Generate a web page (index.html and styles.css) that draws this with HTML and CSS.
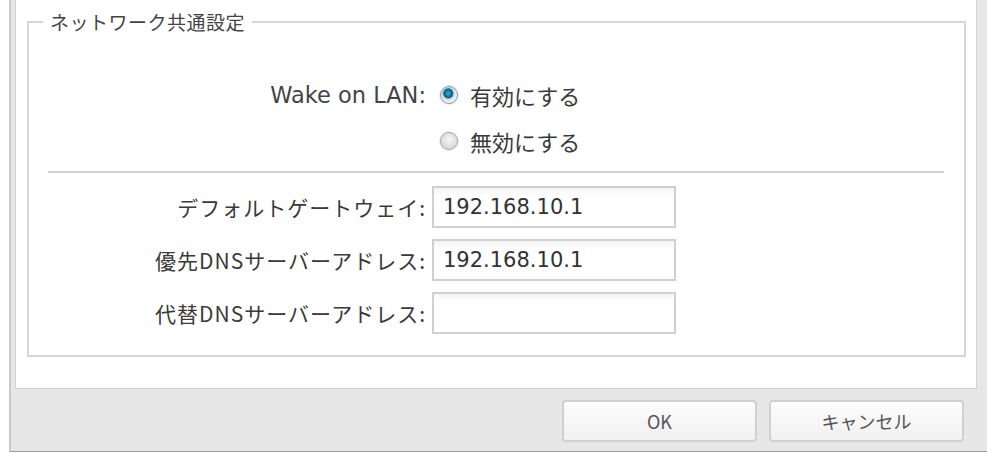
FILE: index.html
```html
<!DOCTYPE html>
<html lang="ja">
<head>
    <meta charset="UTF-8">
    <link rel="stylesheet" href="styles.css">
</head>
<body>
    <div class="window">
        <div class="content">
            <fieldset class="group">
                <legend>ネットワーク共通設定</legend>

                <div class="radio-block">
                    <div class="form-row radio-row">
                        <span class="label">Wake on LAN:</span>
                        <label class="radio-option">
                            <input type="radio" name="wol" checked>
                            <span>有効にする</span>
                        </label>
                    </div>
                    <div class="form-row radio-row">
                        <span class="label"></span>
                        <label class="radio-option">
                            <input type="radio" name="wol">
                            <span>無効にする</span>
                        </label>
                    </div>
                </div>

                <hr class="separator">

                <div class="field-block">
                    <div class="form-row">
                        <span class="label">デフォルトゲートウェイ:</span>
                        <input class="text-field" type="text" value="192.168.10.1">
                    </div>
                    <div class="form-row">
                        <span class="label">優先DNSサーバーアドレス:</span>
                        <input class="text-field" type="text" value="192.168.10.1">
                    </div>
                    <div class="form-row">
                        <span class="label">代替DNSサーバーアドレス:</span>
                        <input class="text-field" type="text" value="">
                    </div>
                </div>
            </fieldset>
        </div>

        <div class="button-bar">
            <button class="btn">OK</button>
            <button class="btn">キャンセル</button>
        </div>
    </div>
</body>
</html>
```

FILE: styles.css
```css
body {
    margin: 0;
    padding: 0;
    background: #fff;
    font-family: "Noto Sans CJK JP", sans-serif;
    color: #3a3a3a;
}

.window {
    margin-left: 9px;
    width: 968px;
    height: 451px;
    background: #e7e7e7;
    border-left: 2px solid #c9c9c9;
    border-right: 1px solid #c9c9c9;
    border-bottom: 1px solid #9a9a9a;
    padding: 0 6px 0 4px;
}

.content {
    width: 960px;
    height: 377px;
    padding-top: 11px;
    background: #fff;
    border-left: 1px solid #d2d2d2;
    border-right: 1px solid #d2d2d2;
    border-bottom: 1px solid #cfcfcf;
}

/* 枠線付きのグループ */
.group {
    margin: 0 0 0 11px;
    width: 939px;
    height: 346px;
    padding: 0;
    border: 2px solid #d6d6d6;
    box-sizing: border-box;
}

.group legend {
    margin-left: 14px;
    padding: 0 7px;
    font-size: 19px;
    letter-spacing: 0.5px;
    line-height: 22px;
    color: #444;
}

.radio-block {
    padding-top: 39px;
}

.form-row {
    display: flex;
    align-items: center;
}

.label {
    width: 397px;
    flex: none;
    text-align: right;
    font-size: 21px;
    letter-spacing: 1px;
    white-space: nowrap;
}

.radio-row {
    height: 46px;
}

.radio-row .label {
    font-family: "DejaVu Sans", "Noto Sans CJK JP", sans-serif;
    font-size: 22.5px;
    letter-spacing: 0;
    color: #444;
}

.radio-option {
    display: flex;
    align-items: center;
    margin-left: 14px;
    font-size: 22px;
}

.radio-option input {
    appearance: none;
    margin: 0 12px 0 0;
    width: 18px;
    height: 18px;
    border-radius: 50%;
    border: 1px solid #a9a9a9;
    background: radial-gradient(circle at 50% 40%, #f6f6f6 0, #dadada 70%, #cfcfcf 100%);
    box-shadow: 0 0 0 1px #e8e8e8;
}

.radio-option input:checked {
    border-color: #8d9aa8;
    background: radial-gradient(circle at 45% 40%, #3fb0d6 0, #1a7ea8 2.5px, #0c5d86 4.5px, #c6d3de 5.5px, #eef2f6 8px);
}

.separator {
    margin: 7px 20px 0 19px;
    height: 0;
    border: none;
    border-top: 2px solid #d0d0d0;
}

.field-block {
    display: flex;
    flex-direction: column;
    gap: 11px;
    padding-top: 13px;
}

.text-field {
    margin-left: 6px;
    width: 244px;
    height: 42px;
    box-sizing: border-box;
    padding: 0 9px;
    border: 2px solid #d0d0d0;
    background: linear-gradient(#f4f4f4, #fff 8px);
    font-family: "DejaVu Sans", sans-serif;
    font-size: 21px;
    color: #333;
    outline: none;
}

.button-bar {
    display: flex;
    justify-content: flex-end;
    gap: 12px;
    padding: 11px 19px 0 0;
}

.btn {
    width: 195px;
    height: 42px;
    border: 2px solid #d0d0d0;
    border-radius: 4px;
    background: linear-gradient(#fdfdfd, #f0f0f0);
    font-family: "Noto Sans CJK JP", sans-serif;
    font-size: 18px;
    color: #555;
}
```
